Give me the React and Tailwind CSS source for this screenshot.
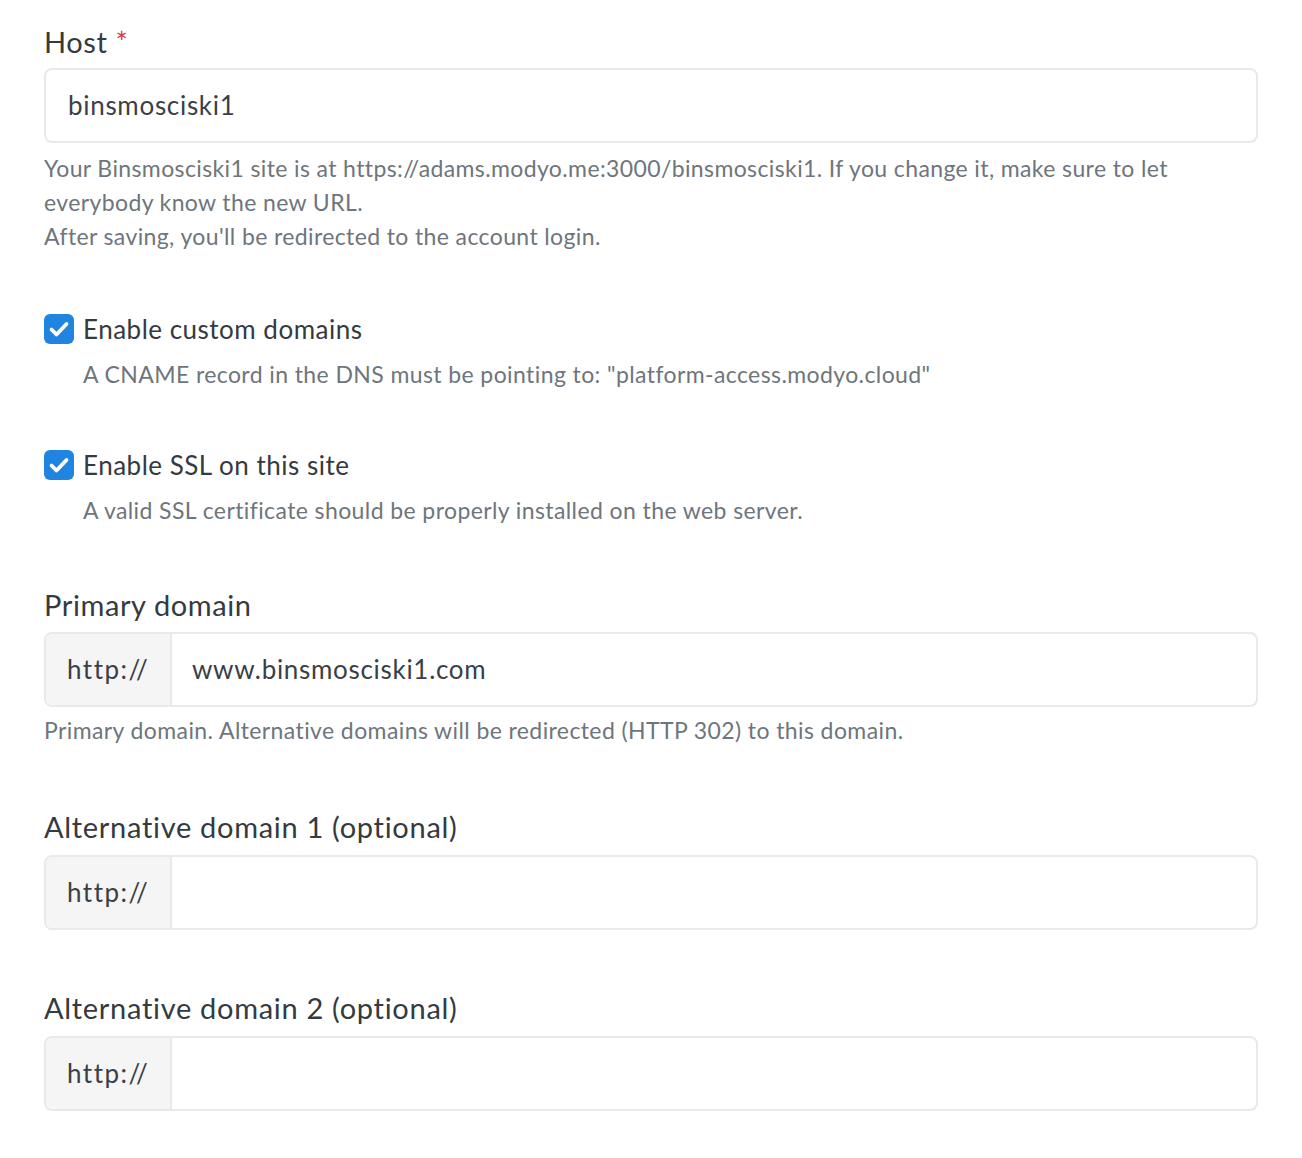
import React from "react";

const font = { fontFamily: '"Lato", "Noto Sans", sans-serif' };

function Check() {
  return (
    <span className="flex h-[30px] w-[30px] shrink-0 items-center justify-center rounded-[6px] bg-[#1f85e0]">
      <svg width="30" height="30" viewBox="0 0 30 30" fill="none">
        <path d="M7.5 15.5l5 5L22.5 10" stroke="white" strokeWidth="3.8" strokeLinecap="round" strokeLinejoin="round" />
      </svg>
    </span>
  );
}

function PrefixInput({ value }) {
  return (
    <div className="flex h-[75px] w-full overflow-hidden rounded-[8px] border-2 border-[#e9e9e9]">
      <div className="flex w-[126px] shrink-0 items-center border-r-2 border-[#e9e9e9] bg-[#f5f5f5] pl-[21px] text-[26px] tracking-[1.5px] text-[#3a3f47]">
        http://
      </div>
      <div className="flex flex-1 items-center pl-[20px] text-[26px] tracking-[0.7px] text-[#3a3f47]">{value}</div>
    </div>
  );
}

export default function App() {
  return (
    <div className="min-h-[1158px] bg-white px-[44px] pt-[25px] text-[#343a40]" style={font}>
      {/* Host */}
      <div className="flex items-center text-[29px] leading-[34px] tracking-[0.6px]">
        Host <span className="ml-[8px] text-[#d9394d]">*</span>
      </div>
      <div className="mt-[9px] flex h-[75px] items-center rounded-[8px] border-2 border-[#e9e9e9] pl-[22px] text-[26px] tracking-[0.7px] text-[#3a3f47]">
        binsmosciski1
      </div>
      <div className="mt-[8px] text-[23px] leading-[34px] tracking-[0.38px] text-[#6e757c]">
        Your Binsmosciski1 site is at https://adams.modyo.me:3000/binsmosciski1. If you change it, make sure to let
        <br />
        everybody know the new URL.
        <br />
        After saving, you'll be redirected to the account login.
      </div>

      {/* Custom domains */}
      <div className="mt-[59px] flex items-center gap-[9px]">
        <Check />
        <span className="text-[26px] leading-[34px] tracking-[0.5px]">Enable custom domains</span>
      </div>
      <div className="ml-[39px] mt-[11px] text-[23px] leading-[34px] tracking-[0.4px] text-[#6e757c]">
        A CNAME record in the DNS must be pointing to: "platform-access.modyo.cloud"
      </div>

      {/* SSL */}
      <div className="mt-[57px] flex items-center gap-[9px]">
        <Check />
        <span className="text-[26px] leading-[34px] tracking-[0.5px]">Enable SSL on this site</span>
      </div>
      <div className="ml-[39px] mt-[11px] text-[23px] leading-[34px] tracking-[0.4px] text-[#6e757c]">
        A valid SSL certificate should be properly installed on the web server.
      </div>

      {/* Primary domain */}
      <div className="mt-[61px] text-[29px] leading-[34px] tracking-[0.6px]">Primary domain</div>
      <div className="mt-[10px]">
        <PrefixInput value="www.binsmosciski1.com" />
      </div>
      <div className="mt-[6px] text-[23px] leading-[34px] tracking-[0.4px] text-[#6e757c]">
        Primary domain. Alternative domains will be redirected (HTTP 302) to this domain.
      </div>

      {/* Alt 1 */}
      <div className="mt-[63px] text-[29px] leading-[34px] tracking-[0.7px]">Alternative domain 1 (optional)</div>
      <div className="mt-[11px]">
        <PrefixInput value="" />
      </div>

      {/* Alt 2 */}
      <div className="mt-[61px] text-[29px] leading-[34px] tracking-[0.7px]">Alternative domain 2 (optional)</div>
      <div className="mt-[11px]">
        <PrefixInput value="" />
      </div>
    </div>
  );
}
